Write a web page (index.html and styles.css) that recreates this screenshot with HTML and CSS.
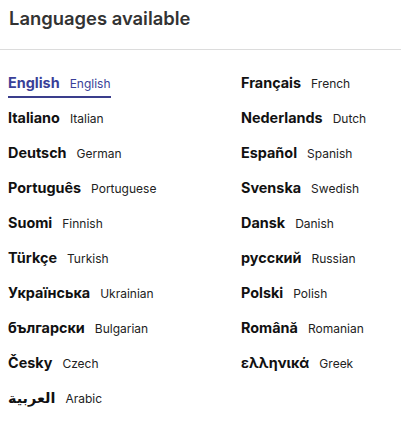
FILE: index.html
```html
<!DOCTYPE html>
<html>
<head>
<meta charset="utf-8">
<link rel="stylesheet" href="styles.css">
</head>
<body>
<div class="panel">
  <h2 class="title">Languages available</h2>
  <div class="divider"></div>
  <ul class="langs">
    <li class="lang active"><span class="native">English</span><span class="eng">English</span></li>
    <li class="lang"><span class="native">Français</span><span class="eng">French</span></li>
    <li class="lang"><span class="native">Italiano</span><span class="eng">Italian</span></li>
    <li class="lang"><span class="native">Nederlands</span><span class="eng">Dutch</span></li>
    <li class="lang"><span class="native">Deutsch</span><span class="eng">German</span></li>
    <li class="lang"><span class="native">Español</span><span class="eng">Spanish</span></li>
    <li class="lang"><span class="native">Português</span><span class="eng">Portuguese</span></li>
    <li class="lang"><span class="native">Svenska</span><span class="eng">Swedish</span></li>
    <li class="lang"><span class="native">Suomi</span><span class="eng">Finnish</span></li>
    <li class="lang"><span class="native">Dansk</span><span class="eng">Danish</span></li>
    <li class="lang"><span class="native">Türkçe</span><span class="eng">Turkish</span></li>
    <li class="lang"><span class="native">русский</span><span class="eng">Russian</span></li>
    <li class="lang"><span class="native">Українська</span><span class="eng">Ukrainian</span></li>
    <li class="lang"><span class="native">Polski</span><span class="eng">Polish</span></li>
    <li class="lang"><span class="native">български</span><span class="eng">Bulgarian</span></li>
    <li class="lang"><span class="native">Română</span><span class="eng">Romanian</span></li>
    <li class="lang"><span class="native">Česky</span><span class="eng">Czech</span></li>
    <li class="lang"><span class="native">ελληνικά</span><span class="eng">Greek</span></li>
    <li class="lang"><span class="native" dir="rtl">العربية</span><span class="eng">Arabic</span></li>
  </ul>
</div>
</body>
</html>
```
FILE: styles.css
```css
html, body {
  margin: 0;
  padding: 0;
  background: #fff;
}
body {
  font-family: "Inter", "DejaVu Sans", sans-serif;
  color: #111;
}
.panel {
  width: 401px;
}
.title {
  margin: 0;
  padding: 7px 8px 0 9px;
  height: 41px;
  box-sizing: border-box;
  font-size: 18.4px;
  font-weight: 600;
  color: #333;
}
.divider {
  height: 1px;
  background: #dcdcdc;
  margin-top: 8px;
}
.langs {
  list-style: none;
  margin: 0;
  padding: 24px 0 0 8px;
  display: grid;
  grid-template-columns: 233px 1fr;
  grid-auto-rows: 35px;
}
.lang {
  display: flex;
  align-items: baseline;
  gap: 10px;
  height: 22px;
  align-self: start;
}
.native {
  font-size: 14.4px;
  font-weight: 700;
  color: #111;
}
.eng {
  font-size: 12px;
  color: #222;
}
.lang.active {
  justify-self: start;
  border-bottom: 2px solid #3a3d8c;
}
.lang.active .native,
.lang.active .eng {
  color: #3a3f98;
}
```
